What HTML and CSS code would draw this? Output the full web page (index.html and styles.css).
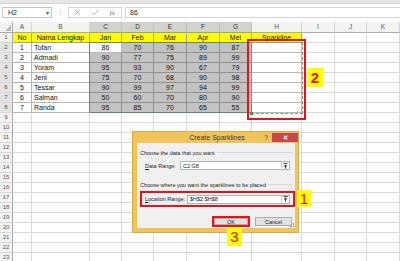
FILE: index.html
```html
<!DOCTYPE html>
<html>
<head>
<meta charset="utf-8">
<link rel="stylesheet" href="styles.css">
</head>
<body>
<div class="app">
  <div class="strip"></div>
  <div class="fbar">
    <div class="namebox"><span>H2</span><span class="caret">▾</span></div>
    <div class="dots">⋮</div>
    <div class="fxicons">
      <span class="ico"><svg width="7" height="7" viewBox="0 0 7 7"><path d="M1 1L6 6M6 1L1 6" stroke="#a8a8a8" stroke-width="0.9" fill="none"/></svg></span>
      <span class="ico"><svg width="8" height="7" viewBox="0 0 8 7"><path d="M1 3.8L3 5.8L7 1" stroke="#a8a8a8" stroke-width="0.9" fill="none"/></svg></span>
      <span class="ico fx">fx</span>
    </div>
    <div class="finput">86</div>
  </div>

  <div class="sheet">
    <div class="corner"><span class="tri"></span></div><div class="ch">A</div><div class="ch">B</div><div class="ch s">C</div><div class="ch s">D</div><div class="ch s">E</div><div class="ch s">F</div><div class="ch s">G</div><div class="ch">H</div><div class="ch">I</div><div class="ch">J</div><div class="ch">K</div>

    <div class="rh">1</div><div class="y">No</div><div class="y">Nama Lengkap</div><div class="y">Jan</div><div class="y">Feb</div><div class="y">Mar</div><div class="y">Apr</div><div class="y">Mei</div><div class="y">Sparkline</div><div></div><div></div><div></div>

    <div class="rh s">2</div><div class="w">1</div><div class="w n">Tofan</div><div class="w">86</div><div class="g">70</div><div class="g">76</div><div class="g">90</div><div class="g">87</div><div class="w"></div><div></div><div></div><div></div>
    <div class="rh s">3</div><div class="w">2</div><div class="w n">Admadi</div><div class="g">90</div><div class="g">77</div><div class="g">75</div><div class="g">89</div><div class="g">99</div><div class="w"></div><div></div><div></div><div></div>
    <div class="rh s">4</div><div class="w">3</div><div class="w n">Yoram</div><div class="g">95</div><div class="g">93</div><div class="g">90</div><div class="g">67</div><div class="g">79</div><div class="w"></div><div></div><div></div><div></div>
    <div class="rh s">5</div><div class="w">4</div><div class="w n">Jeni</div><div class="g">75</div><div class="g">70</div><div class="g">68</div><div class="g">90</div><div class="g">98</div><div class="w"></div><div></div><div></div><div></div>
    <div class="rh s">6</div><div class="w">5</div><div class="w n">Tessar</div><div class="g">90</div><div class="g">99</div><div class="g">97</div><div class="g">94</div><div class="g">99</div><div class="w"></div><div></div><div></div><div></div>
    <div class="rh s">7</div><div class="w">6</div><div class="w n">Salman</div><div class="g">50</div><div class="g">60</div><div class="g">70</div><div class="g">80</div><div class="g">90</div><div class="w"></div><div></div><div></div><div></div>
    <div class="rh s">8</div><div class="w">7</div><div class="w n">Randa</div><div class="g">95</div><div class="g">85</div><div class="g">70</div><div class="g">65</div><div class="g">55</div><div class="w"></div><div></div><div></div><div></div>

    <div class="rh">9</div><div></div><div></div><div></div><div></div><div></div><div></div><div></div><div></div><div></div><div></div><div></div>
    <div class="rh">10</div><div></div><div></div><div></div><div></div><div></div><div></div><div></div><div></div><div></div><div></div><div></div>
    <div class="rh">11</div><div></div><div></div><div></div><div></div><div></div><div></div><div></div><div></div><div></div><div></div><div></div>
    <div class="rh">12</div><div></div><div></div><div></div><div></div><div></div><div></div><div></div><div></div><div></div><div></div><div></div>
    <div class="rh">13</div><div></div><div></div><div></div><div></div><div></div><div></div><div></div><div></div><div></div><div></div><div></div>
    <div class="rh">14</div><div></div><div></div><div></div><div></div><div></div><div></div><div></div><div></div><div></div><div></div><div></div>
    <div class="rh">15</div><div></div><div></div><div></div><div></div><div></div><div></div><div></div><div></div><div></div><div></div><div></div>
    <div class="rh">16</div><div></div><div></div><div></div><div></div><div></div><div></div><div></div><div></div><div></div><div></div><div></div>
    <div class="rh">17</div><div></div><div></div><div></div><div></div><div></div><div></div><div></div><div></div><div></div><div></div><div></div>
    <div class="rh">18</div><div></div><div></div><div></div><div></div><div></div><div></div><div></div><div></div><div></div><div></div><div></div>
    <div class="rh">19</div><div></div><div></div><div></div><div></div><div></div><div></div><div></div><div></div><div></div><div></div><div></div>
    <div class="rh">20</div><div></div><div></div><div></div><div></div><div></div><div></div><div></div><div></div><div></div><div></div><div></div>
    <div class="rh">21</div><div></div><div></div><div></div><div></div><div></div><div></div><div></div><div></div><div></div><div></div><div></div>
    <div class="rh">22</div><div></div><div></div><div></div><div></div><div></div><div></div><div></div><div></div><div></div><div></div><div></div>
    <div class="rh">23</div><div></div><div></div><div></div><div></div><div></div><div></div><div></div><div></div><div></div><div></div><div></div>
  </div>

  <div class="selbox"></div>
  <div class="ants"><span class="handle"></span></div>
  <div class="redbox"></div>
  <div class="tag tag2">2</div>

  <div class="dialog">
    <div class="titlebar">
      <span class="title">Create Sparklines</span>
      <span class="help">?</span>
      <span class="close"><svg width="5" height="5" viewBox="0 0 5 5"><path d="M0.7 0.7L4.3 4.3M4.3 0.7L0.7 4.3" stroke="#fff" stroke-width="1.1"/></svg></span>
    </div>
    <div class="dbody">
      <div class="legend"><span>Choose the data that you want</span><span class="rule"></span></div>
      <div class="field">
        <span class="lbl"><u>D</u>ata Range:</span>
        <div class="input"><span class="val">C2:G8</span><span class="pick"><svg width="5" height="6" viewBox="0 0 5 6"><path d="M0.5 0.5H4.5" stroke="#222" stroke-width="0.8"/><path d="M2.5 1.5L0.6 3.6H4.4Z" fill="#222"/><path d="M2.5 3.4V5.6" stroke="#222" stroke-width="0.9"/></svg></span></div>
      </div>
      <div class="legend l2"><span>Choose where you want the sparklines to be placed</span><span class="rule"></span></div>
      <div class="field loc">
        <span class="lbl"><u>L</u>ocation Range:</span>
        <div class="input"><span class="val">$H$2:$H$8</span><span class="pick"><svg width="5" height="6" viewBox="0 0 5 6"><path d="M0.5 0.5H4.5" stroke="#222" stroke-width="0.8"/><path d="M2.5 1.5L0.6 3.6H4.4Z" fill="#222"/><path d="M2.5 3.4V5.6" stroke="#222" stroke-width="0.9"/></svg></span></div>
      </div>
      <div class="buttons">
        <div class="okwrap"><div class="btn ok">OK</div></div>
        <div class="btn cancel">Cancel</div>
      </div>
      <span class="sizegrip"></span>
    </div>
  </div>

  <div class="tag tag1">1</div>
  <div class="tag tag3">3</div>
</div>
</body>
</html>
```

FILE: styles.css
```css
* { box-sizing: border-box; margin: 0; padding: 0; }
html, body { width: 400px; height: 261px; overflow: hidden; background: #fff; }
body { font-family: "Liberation Sans", Arial, sans-serif; color: #111; }
.app { position: relative; width: 400px; height: 261px; overflow: hidden; }

/* top strip + formula bar */
.strip { height: 4px; background: #e6e6e6; border-bottom: 1px solid #d6d6d6; }
.fbar { height: 18px; display: flex; align-items: flex-start; padding: 3px 0 0 2px; background: #fff; }
.namebox { width: 50px; height: 11px; border: 1px solid #c6c6c6; display: flex; align-items: center; justify-content: space-between; padding: 0 2px 0 5px; font-size: 7px; color: #222; }
.caret { font-size: 6px; color: #555; }
.dots { width: 16px; height: 11px; text-align: center; color: #b0b0b0; font-size: 7px; line-height: 11px; }
.fxicons { width: 54px; height: 11px; border: 1px solid #d6d6d6; display: flex; align-items: center; }
.ico { width: 18px; display: flex; justify-content: center; align-items: center; }
.fx { font-family: "Liberation Serif", serif; font-style: italic; font-size: 7px; color: #666; }
.finput { margin-left: 3px; flex: 1; height: 11px; border: 1px solid #d6d6d6; border-right: none; padding-left: 4px; font-size: 7px; line-height: 9px; color: #222; }

/* grid */
.sheet { display: grid; grid-template-columns: 13px 19px 58px 32px 32px 33px 33px 32px 50px 33px 32px 33px; grid-template-rows: 11px; grid-auto-rows: 10px; font-size: 7px; }
.sheet > div { border-right: 1px solid #dadada; border-bottom: 1px solid #dadada; line-height: 9px; white-space: nowrap; overflow: hidden; color: #111; }
.sheet > .corner { background: #f3f3f3; border-right-color: #ababab; border-bottom-color: #ababab; position: relative; }
.tri { position: absolute; right: 1px; bottom: 1px; width: 0; height: 0; border-left: 6px solid transparent; border-bottom: 6px solid #b8b8b8; }
.sheet > .ch { background: #f3f3f3; color: #555; text-align: center; font-size: 6.5px; line-height: 10px; border-right-color: #d4d4d4; border-bottom-color: #ababab; }
.sheet > .ch.s { background: #d2d2d2; color: #333; border-right-color: #c0c0c0; border-bottom-color: #8ea894; }
.sheet > .rh { background: #f3f3f3; color: #555; text-align: center; font-size: 6px; border-right-color: #ababab; border-bottom-color: #d8d8d8; }
.sheet > .rh.s { background: #e4e4e4; }
.sheet > .y { background: #ffff00; text-align: center; border-color: #a0a0a0; }
.sheet > .w { text-align: center; border-color: #b8b8b8; }
.sheet > .n { text-align: left; padding-left: 2px; }
.sheet > .g { background: #c3c3c3; border-color: #929292; text-align: center; }

/* overlays on the sheet */
.selbox { position: absolute; left: 89px; top: 42px; width: 163px; height: 71px; border: 1px solid #5f8a68; }
.ants { position: absolute; left: 251px; top: 42px; width: 52px; height: 72px; border: 1px dashed #7c9c84; }
.handle { position: absolute; left: -2px; bottom: -2px; width: 3px; height: 3px; background: #4f8a5c; }
.redbox { position: absolute; left: 247px; top: 39px; width: 59px; height: 81px; border: 2px solid #e5141c; }

.tag { position: absolute; background: #ffff00; color: #e2141c; font-family: "Liberation Sans", Arial, sans-serif; font-size: 15px; line-height: 1; display: flex; align-items: center; justify-content: center; }
.tag1 { left: 297px; top: 190px; width: 14px; height: 17px; }
.tag2 { left: 307px; top: 68px; width: 16px; height: 19px; font-weight: bold; }
.tag3 { left: 227px; top: 227px; width: 15px; height: 19px; }

/* dialog */
.dialog { position: absolute; left: 132px; top: 131px; width: 167px; height: 102px; background: #f1c35b; border: 1px solid #dcab45; display: flex; flex-direction: column; padding: 0 3px 4px 4px; }
.titlebar { height: 11px; display: flex; align-items: center; }
.title { flex: 1; text-align: center; padding-left: 36px; font-size: 7px; color: #3a3a3a; }
.help { width: 10px; font-size: 6.5px; color: #333; text-align: center; margin-right: 1px; }
.close { width: 26px; height: 9px; margin-right: -3px; margin-top: -1px; background: #c9474b; display: flex; align-items: center; justify-content: center; }
.dbody { flex: 1; background: #f0f0f0; padding: 6px 0 0 3px; position: relative; font-size: 5.5px; color: #222; display: flex; flex-direction: column; }
.legend { height: 7px; display: flex; align-items: center; margin-right: 2px; }
.rule { flex: 1; height: 0; border-top: 1px solid #d8d8d8; margin-left: 2px; }
.l2 { margin-top: 11px; }
.field { display: flex; align-items: center; height: 9px; margin-top: 5px; padding-left: 5px; margin-right: 5px; }
.lbl { width: 35px; }
.input { flex: 1; height: 9px; background: #fff; border: 1px solid #b5b5b5; display: flex; align-items: center; padding-left: 2px; }
.val { flex: 1; }
.pick { width: 8px; height: 7px; border-left: 1px solid #d0d0d0; display: flex; align-items: center; justify-content: center; }
.loc { height: 16px; margin-top: 3px; margin-right: 0; border: 2px solid #e5141c; padding: 0 3px; }
.loc .lbl { width: 42px; }
.buttons { display: flex; justify-content: flex-end; align-items: center; gap: 5px; margin-top: 9px; padding-right: 3px; }
.okwrap { width: 38px; height: 11px; border: 2px solid #e5141c; }
.btn { background: #e1e1e1; border: 1px solid #adadad; text-align: center; font-size: 5.5px; color: #222; display: flex; align-items: center; justify-content: center; }
.ok { width: 100%; height: 100%; }
.cancel { width: 37px; height: 9px; }
.sizegrip { position: absolute; right: 1px; bottom: 1px; width: 4px; height: 4px; border-right: 1px dotted #999; border-bottom: 1px dotted #999; }
```
